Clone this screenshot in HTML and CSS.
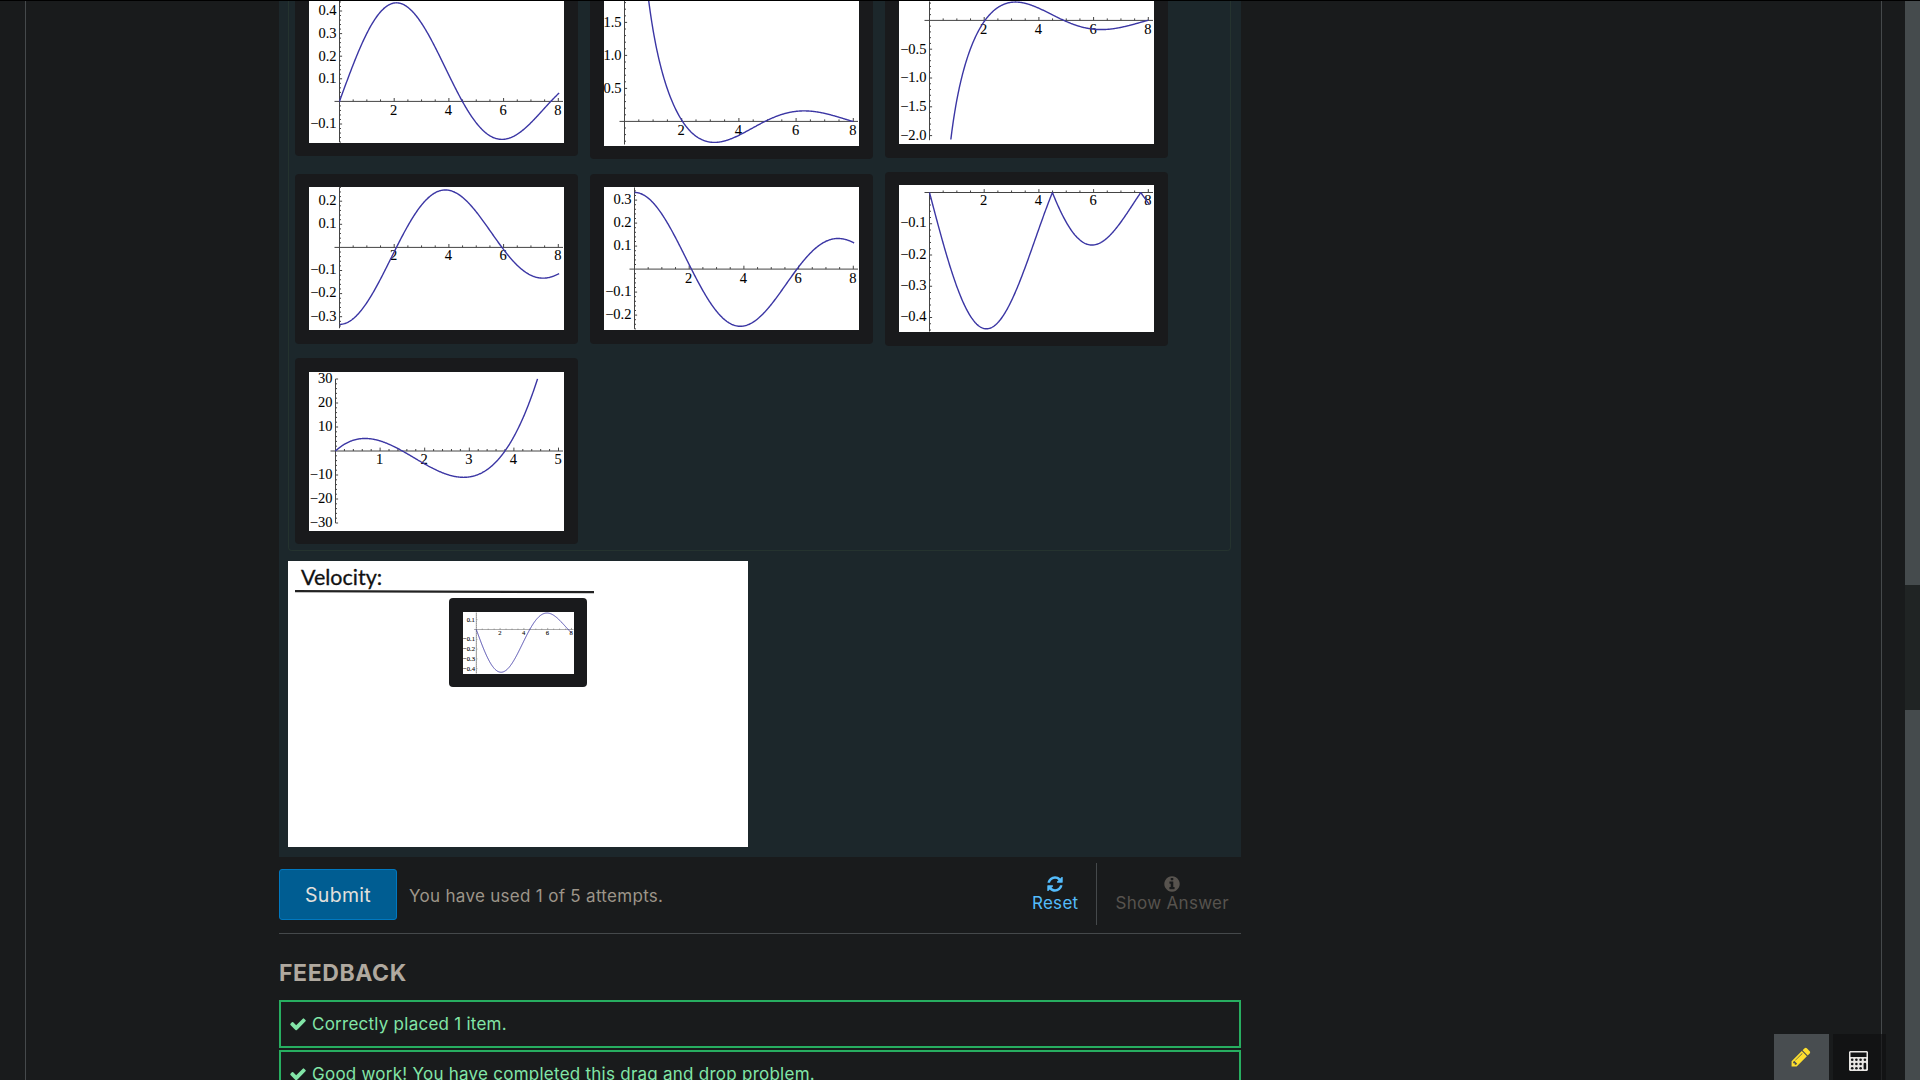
FILE: index.html
```html
<!DOCTYPE html>
<html lang="en">
<head>
<meta charset="utf-8">
<title>Drag and Drop Problem</title>
<link rel="stylesheet" href="styles.css">
</head>
<body>
<div class="window">
  <main class="page">
    <section class="problem">
      <div class="drag-container">
        <div class="item-bank">
          <div class="bank-row">
            <div class="item h168"><svg class="plot" data-plot="p1"></svg></div>
            <div class="item h174"><svg class="plot" data-plot="p2"></svg></div>
            <div class="item h172"><svg class="plot" data-plot="p3"></svg></div>
          </div>
          <div class="bank-row">
            <div class="item h170"><svg class="plot" data-plot="p4"></svg></div>
            <div class="item h170"><svg class="plot" data-plot="p5"></svg></div>
            <div class="item h174"><svg class="plot" data-plot="p6"></svg></div>
          </div>
          <div class="bank-row last">
            <div class="item h186"><svg class="plot" data-plot="p7"></svg></div>
          </div>
        </div>
        <div class="target">
          <div class="target-title">Velocity:</div>
          <svg class="target-rule" viewBox="0 0 300 4"><path d="M0 1.2L299 2.2" stroke="#222" stroke-width="2.2"/></svg>
          <div class="item placed"><svg class="plot" data-plot="p8"></svg></div>
        </div>
      </div>
      <div class="actions">
        <button class="submit">Submit</button>
        <span class="attempts">You have used 1 of 5 attempts.</span>
        <div class="action reset">
          <svg class="icon" viewBox="0 0 1792 1792"><path d="M1639 1056q0 5-1 7-64 268-268 434.500t-478 166.500q-146 0-282.500-55t-243.500-157l-129 129q-19 19-45 19t-45-19-19-45v-448q0-26 19-45t45-19h448q26 0 45 19t19 45-19 45l-137 137q71 66 161 102t187 36q134 0 250-65t186-179q11-17 53-117 8-23 30-23h192q13 0 22.500 9.500t9.500 22.500zm25-800v448q0 26-19 45t-45 19h-448q-26 0-45-19t-19-45 19-45l138-138q-148-137-349-137-134 0-250 65t-186 179q-11 17-53 117-8 23-30 23h-199q-13 0-22.500-9.500t-9.500-22.500v-7q65-268 270-434.500t480-166.500q146 0 284 55.500t245 156.500l130-129q19-19 45-19t45 19 19 45z"/></svg>
          <span>Reset</span>
        </div>
        <div class="action show">
          <svg class="icon" viewBox="0 0 1792 1792"><path d="M1152 1376v-160q0-14-9-23t-23-9h-96v-512q0-14-9-23t-23-9h-320q-14 0-23 9t-9 23v160q0 14 9 23t23 9h96v320h-96q-14 0-23 9t-9 23v160q0 14 9 23t23 9h448q14 0 23-9t9-23zm-128-896v-160q0-14-9-23t-23-9h-192q-14 0-23 9t-9 23v160q0 14 9 23t23 9h192q14 0 23-9t9-23zm640 416q0 209-103 385.500t-279.500 279.500-385.500 103-385.500-103-279.500-279.500-103-385.500 103-385.500 279.500-279.500 385.500-103 385.500 103 279.500 279.500 103 385.500z"/></svg>
          <span>Show Answer</span>
        </div>
      </div>
      <h3 class="feedback-title">FEEDBACK</h3>
      <p class="message"><svg class="icon" viewBox="0 0 1792 1792"><path d="M1671 566q0 40-28 68l-724 724-136 136q-28 28-68 28t-68-28l-136-136-362-362q-28-28-28-68t28-68l136-136q28-28 68-28t68 28l294 295 656-657q28-28 68-28t68 28l136 136q28 28 28 68z"/></svg><span>Correctly placed 1 item.</span></p>
      <p class="message"><svg class="icon" viewBox="0 0 1792 1792"><path d="M1671 566q0 40-28 68l-724 724-136 136q-28 28-68 28t-68-28l-136-136-362-362q-28-28-28-68t28-68l136-136q28-28 68-28t68 28l294 295 656-657q28-28 68-28t68 28l136 136q28 28 28 68z"/></svg><span>Good work! You have completed this drag and drop problem.</span></p>
    </section>
  </main>
  <div class="scrollbar"><div class="thumb"></div></div>
  <div class="tools">
    <div class="tool notes"><svg viewBox="0 0 1792 1792"><path d="M491 1536l91-91-235-235-91 91v107h128v128h107zm523-928q0-22-22-22-10 0-17 7l-542 542q-7 7-7 17 0 22 22 22 10 0 17-7l542-542q7-7 7-17zm-54-192l416 416-832 832h-416v-416zm683 96q0 53-37 90l-166 166-416-416 166-165q36-38 90-38 53 0 91 38l235 234q37 39 37 91z"/></svg></div>
    <div class="tool calc"><svg viewBox="0 0 19 20"><path fill-rule="evenodd" d="M1 0H18L19 1V19L18 20H1L0 19V1ZM1.500 1.500V6H17.500V1.500Z"/><g class="keys"><circle cx="3.200" cy="8.800" r="1.300"/><circle cx="7.400" cy="8.800" r="1.300"/><circle cx="11.600" cy="8.800" r="1.300"/><circle cx="15.900" cy="8.800" r="1.300"/><circle cx="3.200" cy="13" r="1.300"/><circle cx="7.400" cy="13" r="1.300"/><circle cx="11.600" cy="13" r="1.300"/><circle cx="3.200" cy="17.200" r="1.300"/><circle cx="7.400" cy="17.200" r="1.300"/><circle cx="11.600" cy="17.200" r="1.300"/><rect x="14.600" y="11.800" width="2.600" height="6.600" rx="1.200"/></g></svg></div>
  </div>
</div>
<script src="plots.js"></script>
</body>
</html>
```
FILE: styles.css
```css
* { box-sizing: border-box; }
body { margin: 0; background: #191b1c; font-family: Inter, "Liberation Sans", sans-serif; }
.window { position: relative; display: flex; width: 1920px; height: 1080px; overflow: hidden; border-top: 1px solid #000; }
.page { width: 1857px; margin: 0 23px 0 25px; border: solid #45494b; border-width: 0 1px; flex: none; }
.problem { width: 962px; margin-left: 253px; }
.drag-container { height: 856px; padding: 0 9px; background: #1c272b; display: flow-root; }
.item-bank { width: 943px; height: 566px; margin-top: -16px; padding: 0 6px; border: 1px solid #25332f; border-top: 0; border-radius: 0 0 4px 4px; }
.bank-row { display: flex; align-items: center; gap: 12px; height: 174px; margin-bottom: 13px; }
.bank-row + .bank-row { margin-bottom: 12px; }
.bank-row.last { height: 186px; margin-bottom: 0; }
.item { width: 283px; padding: 13px 14px 14px; background: #191a1c; border-radius: 4px; flex: none; }
.h168 { height: 168px; padding-bottom: 13px; }
.h170 { height: 170px; }
.h172 { height: 172px; }
.h174 { height: 174px; padding-bottom: 14px; }
.h174:nth-child(2) { padding-bottom: 13px; }
.h186 { height: 186px; padding: 14px 14px 13px; }
.plot { display: block; width: 100%; height: 100%; background: #fff; overflow: visible; }
.plot text { font-family: "Liberation Serif", serif; fill: #000; stroke: #000; stroke-width: .08px; }
.plot .axes { stroke: #444; fill: none; }
.plot .curve { stroke: #3b36a4; fill: none; stroke-linejoin: round; }
.target { width: 460px; height: 286px; margin-top: 10px; padding: 0 7px; background: #fff; display: flow-root; }
.target-title { height: 29px; padding-left: 6px; font: 21.5px/33px Lato, "Noto Sans", sans-serif; color: #111; -webkit-text-stroke: .3px #111; }
.target-rule { display: block; width: 300px; height: 4px; }
.placed { width: 138px; height: 89px; margin: 4px 0 0 154px; padding: 14px 13px 13px 14px; }
.icon { width: 18px; height: 18px; fill: currentColor; display: block; }
.actions { display: flex; align-items: center; height: 77px; border-bottom: 1px solid #45494b; font-size: 17px; letter-spacing: .3px; }
.submit { width: 118px; height: 51px; margin-bottom: 2px; padding-top: 3px; border: 1px solid #0078c0; border-radius: 3px; background: #005d92; color: #e3e0dc; font: 19.5px Inter, sans-serif; letter-spacing: .3px; }
.attempts { margin: 0 auto 0 12px; color: #9d9589; padding-top: 1px; }
.action { display: flex; flex-direction: column; align-items: center; height: 62px; margin-bottom: 3px; padding-top: 12px; line-height: 20px; }
.reset { padding-right: 18px; border-right: 1px solid #45494b; color: #54bcfb; }
.show { padding: 12px 12px 0 18px; color: #57534e; }
.feedback-title { margin: 0; padding-top: 25px; height: 66px; font-size: 23px; line-height: 29px; font-weight: 700; letter-spacing: .6px; color: #b0a99f; }
.message { display: flex; align-items: center; height: 48px; margin: 0 0 2px; padding: 0 8px 1px; border: 2px solid #27ae60; color: #82e5a7; font-size: 17px; letter-spacing: .25px; }
.message span { margin: 1px 0 0 5px; }
.scrollbar { width: 15px; background: #454b4d; }
.thumb { height: 125px; margin-top: 584px; background: #202424; }
.tools { position: absolute; right: 34px; bottom: 0; display: flex; gap: 4px; }
.tool { height: 46px; }
.notes { width: 55px; padding: 12px 0 0 16px; background: #484d50; }
.notes svg { width: 22px; height: 22px; display: block; fill: #fddf2e; }
.calc { width: 53px; padding: 17px 0 0 16px; background: rgba(15,16,17,.65); }
.calc svg { width: 19px; height: 20px; display: block; fill: #e8e6e3; }
.calc .keys { fill: #131415; }
```
FILE: plots.js
```js
const j1 = x => x < 1e-3 ? x / 3 : Math.sin(x) / (x * x) - Math.cos(x) / x;
const dj1 = x => x < 1e-3 ? 1 / 3 : Math.sin(x) / x - 2 * j1(x) / x;
const y1 = x => Math.sin(x) / (x * x) + Math.cos(x) / x;
const cubic = x => 3 * x * (x - 1.5) * (x - 3.8);

// box: width and height of the plot; o: origin; s: scale per unit; y: vertical axis range; step/minor: y ticks
const plots = {
  p1: { box: [255, 142], o: [30.5, 100.4], s: [27.35, 226], f: j1, from: 0, to: 8.03, y: [-0.18, 0.45], step: 0.1, minor: 0.02 },
  p2: { box: [255, 147], o: [20.5, 122.4], s: [28.6, 66], f: y1, from: 0.7, to: 8, y: [-0.35, 1.85], step: 0.5, minor: 0.1 },
  p3: { box: [255, 145], o: [30.5, 21.4], s: [27.35, 57.6], f: x => -y1(x), from: 0.78, to: 8, y: [-2.08, 0.33], step: 0.5, minor: 0.1 },
  p4: { box: [255, 143], o: [30.5, 60.4], s: [27.35, 231], f: x => -dj1(x), from: 0, to: 8.03, y: [-0.35, 0.26], step: 0.1, minor: 0.02, lift: 0.5 },
  p5: { box: [255, 143], o: [30.5, 82.1], s: [27.35, 230], f: dj1, from: 0, to: 8.03, y: [-0.26, 0.355], step: 0.1, minor: 0.02 },
  p6: { box: [255, 147], o: [30.5, 7.5], s: [27.35, 312.5], f: x => -Math.abs(j1(x)), from: 0, to: 8.03, y: [-0.445, 0], step: 0.1, minor: 0.02, lift: 0.8 },
  p7: { box: [255, 159], o: [26.5, 79], s: [44.6, 2.4], f: cubic, from: 0, to: 4.53, y: [-30, 30], step: 10, minor: 2, xmax: 5, xstep: 1, xminor: 0.2, digits: 0, lift: 0.4 },
  p8: { box: [111, 62], o: [13.3, 17.5], s: [11.9, 98], f: x => -j1(x), from: 0, to: 8, y: [-0.45, 0.175], step: 0.1, minor: 0.02, k: 0.455, lift: 0.1 }
};

document.querySelectorAll('[data-plot]').forEach(svg => {
  const p = plots[svg.dataset.plot], k = p.k || 1, lift = p.lift || 0;
  const [ox, oy] = p.o, [sx, sy] = p.s;
  const xmax = p.xmax || 8, xstep = p.xstep || 2, xminor = p.xminor || 0.5, digits = p.digits ?? 1;
  svg.setAttribute('viewBox', `0 0 ${p.box[0]} ${p.box[1]}`);
  svg.setAttribute('preserveAspectRatio', 'xMidYMax meet');
  const isMultiple = (v, n) => Math.abs(v / n - Math.round(v / n)) < 1e-6;
  let axes = `M${ox - 5 * k} ${oy}H${p.box[0] - k}M${ox} ${oy - p.y[1] * sy}V${oy - p.y[0] * sy}`;
  let labels = '';
  for (let i = 1; i * xminor <= xmax + 1e-6; i++) {
    const v = i * xminor, major = isMultiple(v, xstep), x = ox + v * sx;
    axes += `M${x} ${oy}v${(major ? -3.4 : -2) * k}`;
    if (major) labels += `<text x="${x - 0.5 * k}" y="${oy + 13.4 * k - lift}" text-anchor="middle">${Math.round(v)}</text>`;
  }
  for (let i = Math.ceil(p.y[0] / p.minor - 1e-6); i * p.minor <= p.y[1] + 1e-6; i++) {
    if (!i) continue;
    const v = i * p.minor, major = isMultiple(v, p.step), y = oy - v * sy;
    axes += `M${ox} ${y}h${(major ? 2.6 : 1.5) * k}`;
    if (major) labels += `<text x="${ox - 3 * k}" y="${y + 4.3 * k - lift}" text-anchor="end">${v.toFixed(digits).replace('-', '−')}</text>`;
  }
  let curve = '';
  for (let i = 0; i <= 400; i++) {
    const x = p.from + (p.to - p.from) * i / 400;
    curve += `${i ? 'L' : 'M'}${(ox + x * sx).toFixed(2)} ${(oy - p.f(x) * sy).toFixed(2)}`;
  }
  svg.innerHTML = `<path class="axes" stroke-width="${k}" d="${axes}"/><g font-size="${14.5 * k}">${labels}</g><path class="curve" stroke-width="${k < 1 ? 0.9 : 1.4}" d="${curve}"/>`;
});
```
